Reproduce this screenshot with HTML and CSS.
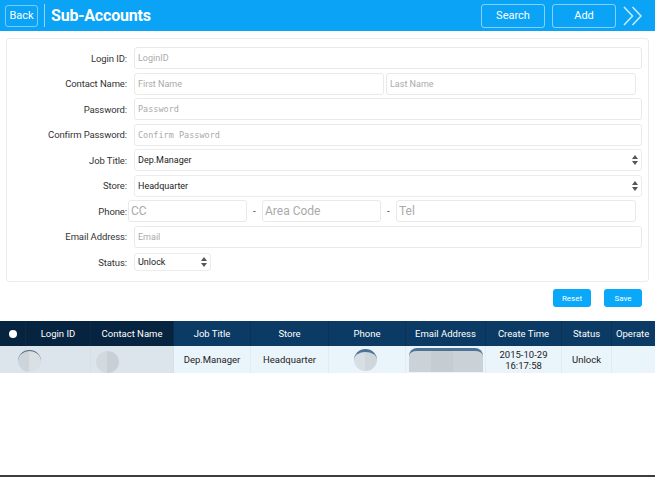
FILE: index.html
```html
<!DOCTYPE html>
<html>
<head>
<meta charset="utf-8">
<link rel="stylesheet" href="styles.css">
</head>
<body>
<div class="page">
  <header class="topbar">
    <button class="back">Back</button>
    <span class="divider"></span>
    <h1 class="title">Sub-Accounts</h1>
    <div class="actions">
      <button class="hbtn">Search</button>
      <button class="hbtn">Add</button>
      <svg class="chev" width="24" height="24" viewBox="0 0 24 24"><path d="M3 3 L11.5 12 L3 21 M11.5 3 L20 12 L11.5 21" fill="none" stroke="#c9e9fb" stroke-width="1.6"/></svg>
    </div>
  </header>

  <form class="card">
    <div class="row"><label class="lbl">Login ID:</label><div class="field"><input class="inp" placeholder="LoginID"></div></div>
    <div class="row"><label class="lbl">Contact Name:</label><div class="field pair"><input class="inp" placeholder="First Name"><input class="inp" placeholder="Last Name"></div></div>
    <div class="row"><label class="lbl">Password:</label><div class="field"><input class="inp mono" placeholder="Password"></div></div>
    <div class="row"><label class="lbl">Confirm Password:</label><div class="field"><input class="inp mono" placeholder="Confirm Password"></div></div>
    <div class="row"><label class="lbl">Job Title:</label><div class="field"><div class="sel">Dep.Manager<svg class="arr" width="6" height="10" viewBox="0 0 6 10"><path d="M0 4 L3 0 L6 4 Z M0 6 L3 10 L6 6 Z" fill="#555"/></svg></div></div></div>
    <div class="row"><label class="lbl">Store:</label><div class="field"><div class="sel">Headquarter<svg class="arr" width="6" height="10" viewBox="0 0 6 10"><path d="M0 4 L3 0 L6 4 Z M0 6 L3 10 L6 6 Z" fill="#555"/></svg></div></div></div>
    <div class="row phone"><label class="lbl">Phone:</label><div class="field tel"><input class="inp big cc" placeholder="CC"><span class="dash">-</span><input class="inp big cc" placeholder="Area Code"><span class="dash">-</span><input class="inp big tl" placeholder="Tel"></div></div>
    <div class="row"><label class="lbl">Email Address:</label><div class="field"><input class="inp" placeholder="Email"></div></div>
    <div class="row"><label class="lbl">Status:</label><div class="field"><div class="sel small">Unlock<svg class="arr" width="6" height="10" viewBox="0 0 6 10"><path d="M0 4 L3 0 L6 4 Z M0 6 L3 10 L6 6 Z" fill="#555"/></svg></div></div></div>
  </form>

  <div class="formbtns">
    <button class="bbtn">Reset</button>
    <button class="bbtn">Save</button>
  </div>

  <div class="tablewrap">
    <div class="trow thead">
      <div class="c c0 dk"><span class="dot"></span></div>
      <div class="c c1 dk">Login ID</div>
      <div class="c c2 dk">Contact Name</div>
      <div class="c c3">Job Title</div>
      <div class="c c4">Store</div>
      <div class="c c5">Phone</div>
      <div class="c c6">Email Address</div>
      <div class="c c7">Create Time</div>
      <div class="c c8">Status</div>
      <div class="c c9">Operate</div>
    </div>
    <div class="trow tbody">
      <div class="c c0 gr"><span class="blob b1"></span></div>
      <div class="c c1 gr"></div>
      <div class="c c2 gr"><span class="blob b2"></span></div>
      <div class="c c3">Dep.Manager</div>
      <div class="c c4">Headquarter</div>
      <div class="c c5"><span class="blob b3"></span></div>
      <div class="c c6"><span class="pix"></span></div>
      <div class="c c7">2015-10-29<br>16:17:58</div>
      <div class="c c8">Unlock</div>
      <div class="c c9"></div>
    </div>
  </div>
</div>
</body>
</html>
```

FILE: styles.css
```css
* { box-sizing: border-box; }
html, body { margin: 0; padding: 0; }
body { font-family: Roboto, "Noto Sans", sans-serif; background: #fff; color: #333; }
.page { width: 655px; height: 477px; border-bottom: 2px solid #3d3d3d; overflow: hidden; }

.topbar { height: 31px; background: #0aa3f5; display: flex; align-items: center; padding: 0 5px; }
.back { height: 22px; width: 33px; border: 1px solid rgba(255,255,255,0.45); border-radius: 3px; background: transparent; color: #fff; font: 11px Roboto, sans-serif; padding: 0; }
.divider { width: 1px; height: 23px; background: rgba(255,255,255,0.55); margin: 0 6px 0 6px; }
.title { margin: 0; color: #fff; font: bold 16px Roboto, sans-serif; letter-spacing: -0.2px; }
.actions { margin-left: auto; display: flex; align-items: center; gap: 7px; }
.hbtn { width: 64px; height: 24px; background: transparent; border: 1px solid rgba(255,255,255,0.5); border-radius: 3px; color: #fff; font: 11px Roboto, sans-serif; padding: 0; }
.chev { margin: 0 5px 0 -2px; }

.card { margin: 7px 6px 0 6px; border: 1px solid #ececec; border-radius: 3px; padding: 8px 6px 8px 0; display: flex; flex-direction: column; gap: 3.5px; }
.row { display: flex; align-items: center; height: 22px; }
.lbl { width: 120px; text-align: right; font-size: 9.5px; color: #333; letter-spacing: -0.1px; }
.field { margin-left: 7px; flex: 1; display: flex; height: 22px; align-items: center; }
.phone .field { margin-left: 1px; }
.inp { height: 22px; width: 100%; border: 1px solid #e9e9e9; border-radius: 3px; padding: 0 3px; font: 9px Roboto, sans-serif; color: #333; outline: none; background: #fff; }
.inp::placeholder { color: #aaa; }
.mono { font-family: "DejaVu Sans Mono", monospace; font-size: 8.5px; padding-left: 3px; }
.pair { gap: 2px; padding-right: 6px; }
.pair .inp { flex: 1; }
.tel { padding-right: 6px; }
.big { font-size: 12px; padding-left: 2px; }
.cc { width: 119px; flex: none; }
.tl { flex: 1; }
.dash { width: 15px; text-align: center; font-size: 10px; color: #555; }
.sel { position: relative; height: 22px; width: 100%; border: 1px solid #ececec; border-radius: 3px; font-size: 9px; color: #222; padding: 0 3px; display: flex; align-items: center; }
.sel.small { width: 77px; height: 18px; }
.arr { position: absolute; right: 3px; top: 50%; transform: translateY(-50%); }

.formbtns { display: flex; justify-content: flex-end; gap: 13px; padding: 7px 13px 0 0; }
.bbtn { width: 38px; height: 18px; border: none; border-radius: 3px; background: #0aa8f8; color: #fff; font: 8px Roboto, sans-serif; padding: 0; }

.tablewrap { margin-top: 14px; width: 655px; overflow: hidden; }
.trow { display: flex; width: 700px; }
.c { flex: none; display: flex; align-items: center; justify-content: center; text-align: center; font-size: 9.5px; position: relative; }
.thead { height: 25px; background: #0b3b64; color: #fff; }
.thead .c { border-right: 1px solid #0a3257; }
.thead .dk { background: #062340; border-right-color: #0a2a48; }
.tbody { height: 27px; background: #eaf4fb; color: #222; line-height: 11px; }
.tbody .c { border-right: 1px solid #e0ebf2; }
.tbody .gr { background: #dce5ec; border-right-color: #d6e0e7; }
.c0 { width: 26px; }
.c1 { width: 65px; }
.c2 { width: 83px; }
.c3 { width: 77px; }
.c4 { width: 78px; }
.c5 { width: 77px; }
.c6 { width: 80px; }
.c7 { width: 76px; }
.c8 { width: 50px; }
.c9 { width: 80px; justify-content: flex-start; padding-left: 4px; }
.dot { width: 8px; height: 8px; border-radius: 50%; background: #fff; }
.blob { display: block; width: 23px; height: 22px; border-radius: 50%; background: linear-gradient(90deg, #cdd5da 50%, #d9e0e4 50%); }
.b1 { position: absolute; left: 18px; top: 4px; z-index: 1; border-top: 1px solid #4c6b84; }
.b2 { position: absolute; left: 5px; top: 5px; background: linear-gradient(90deg, #d3dadf 50%, #c8d0d5 50%); }
.b3 { margin-left: -4px; border-top: 3px solid #4d7495; background: linear-gradient(90deg, #d8dfe4 50%, #cfd7dc 50%); }
.pix { display: block; width: 74px; height: 24px; border-top: 3px solid #4d7495; border-radius: 8px 8px 0 0; background: linear-gradient(90deg, #cbd3d8 0 30%, #c6cdd2 30% 60%, #cbd2d7 60%); }
```
